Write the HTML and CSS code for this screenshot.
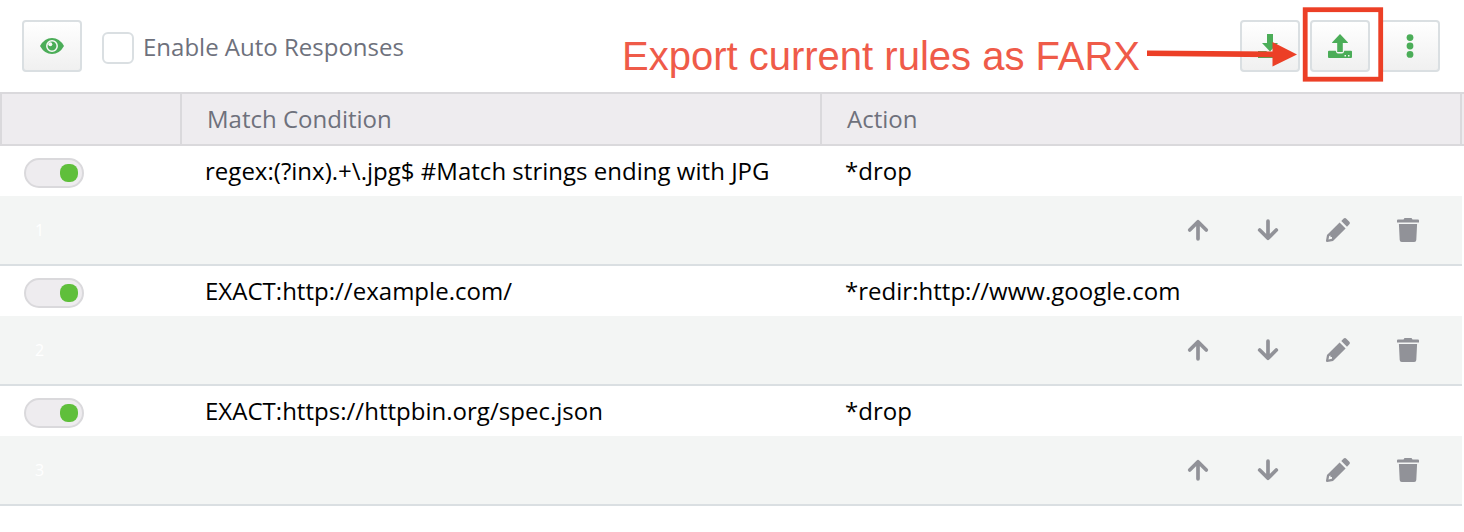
FILE: index.html
```html
<!DOCTYPE html>
<html lang="en">
<head>
<meta charset="utf-8">
<title>Auto Responder</title>
<link rel="stylesheet" href="styles.css">
</head>
<body>
<svg class="defs" aria-hidden="true">
  <symbol id="up" viewBox="0 0 24 24"><path d="M12 20.800V4.500M3.700 12L12 3.700L20.300 12" fill="none" stroke="currentColor" stroke-width="3.700" stroke-linejoin="round" stroke-linecap="round"/></symbol>
  <symbol id="down" viewBox="0 0 24 24"><path d="M12 3.200V19.500M3.700 12L12 20.300L20.300 12" fill="none" stroke="currentColor" stroke-width="3.700" stroke-linejoin="round" stroke-linecap="round"/></symbol>
  <symbol id="pencil" viewBox="0 0 24 24"><path fill="currentColor" fill-rule="evenodd" d="M13.600 4.400L19.600 10.400L7 23L1.200 24Q-.2 24 0 22.600L1 17ZM3.200 18L2.500 21.500L6 20.800V19H4.500V17.500ZM15.300 2.900L17.400 .8Q19-.7 20.600 .9L23.100 3.400Q24.700 5 23.100 6.600L21 8.700Z"/></symbol>
  <symbol id="trash" viewBox="0 0 24 24"><path fill="currentColor" d="M1 2.500Q1 1.500 2 1.500H7.500L8.500 0H15.500L16.500 1.500H22Q23 1.500 23 2.500V4.500H1ZM2.900 6H21.100L20.300 22Q20.200 24 18.200 24H5.800Q3.800 24 3.700 22Z"/></symbol>
</svg>
<header class="toolbar">
  <button class="btn" aria-label="Preview"><svg width="24" height="16" viewBox="0 0 24 16"><path fill="currentColor" d="M0 8Q4.500 0 12 0T24 8Q19.500 16 12 16T0 8Z"/><circle cx="12" cy="8" r="5.200" fill="none" stroke="#f9f9f9" stroke-width="1.500"/><circle cx="10.300" cy="6.200" r="2" fill="#f9f9f9"/></svg></button>
  <label class="enable"><span class="check"></span><span class="caption">Enable Auto Responses</span></label>
  <div class="actions">
    <button class="btn" aria-label="Import"><svg width="24" height="24" viewBox="0 0 24 24"><path fill="currentColor" d="M9 0H15V9H20L12 17.500L4 9H9ZM0 17H8L12 20L16 17H24V24H0Z"/></svg></button>
    <button class="btn" aria-label="Export"><svg width="24" height="24" viewBox="0 0 24 24"><path fill="currentColor" d="M9.200 18V9H4Q4 8.400 4.500 7.900L12 0L19.500 7.900Q20 8.400 20 9H14.800V18ZM1 16.700H7.700Q8.200 19.400 10 19.400H14Q15.800 19.400 16.300 16.700H23Q24 16.700 24 17.700V23Q24 24 23 24H1Q0 24 0 23V17.700Q0 16.700 1 16.700Z"/><path fill="#f4f4f4" d="M16.500 21h1.500v1.500h-1.500zM20 21h1.500v1.500h-1.500z"/></svg></button>
    <button class="btn" aria-label="More"><svg width="8" height="24" viewBox="0 0 8 24" fill="currentColor"><circle cx="4" cy="3.600" r="3.400"/><circle cx="4" cy="12" r="3.400"/><circle cx="4" cy="20.400" r="3.400"/></svg></button>
  </div>
  <div class="note">Export current rules as FARX</div>
  <svg class="arrow" width="152" height="30" viewBox="0 0 152 30"><path fill="#ec3f26" d="M1 9.500L126.500 10.500V1L151 13.500L126.500 25.500V16.200L1 15Z"/></svg>
  <svg class="highlight" width="82" height="76" viewBox="0 0 82 76"><rect x="3.200" y="2.700" width="75.500" height="69.500" fill="none" stroke="#ec3f26" stroke-width="4.800"/></svg>
</header>
<main class="rules">
  <div class="head"><div class="cell"></div><div class="cell">Match Condition</div><div class="cell">Action</div><div></div></div>
  <section class="rule">
    <div class="line"><span class="toggle"></span><span class="text">regex:(?inx).+\.jpg$ #Match strings ending with JPG</span><span class="text">*drop</span></div>
    <div class="tools"><span class="num">1</span><svg class="icon"><use href="#up"/></svg><svg class="icon"><use href="#down"/></svg><svg class="icon"><use href="#pencil"/></svg><svg class="icon"><use href="#trash"/></svg></div>
  </section>
  <section class="rule">
    <div class="line"><span class="toggle"></span><span class="text">EXACT:http://example.com/</span><span class="text">*redir:http://www.google.com</span></div>
    <div class="tools"><span class="num">2</span><svg class="icon"><use href="#up"/></svg><svg class="icon"><use href="#down"/></svg><svg class="icon"><use href="#pencil"/></svg><svg class="icon"><use href="#trash"/></svg></div>
  </section>
  <section class="rule">
    <div class="line"><span class="toggle"></span><span class="text">EXACT:https://httpbin.org/spec.json</span><span class="text">*drop</span></div>
    <div class="tools"><span class="num">3</span><svg class="icon"><use href="#up"/></svg><svg class="icon"><use href="#down"/></svg><svg class="icon"><use href="#pencil"/></svg><svg class="icon"><use href="#trash"/></svg></div>
  </section>
</main>
</body>
</html>
```
FILE: styles.css
```css
* { box-sizing: border-box; }
body { margin: 0; background: #fff; color: #000; font: 24px/32px "Open Sans", "Noto Sans", sans-serif; overflow: hidden; }
.defs { display: none; }
.toolbar { position: relative; display: flex; align-items: center; height: 92px; padding: 0 24px 0 22px; }
.btn { display: flex; align-items: center; justify-content: center; width: 60px; height: 52px; padding: 0; border: 2px solid #dadfe2; border-radius: 4px; background: linear-gradient(#fff, #f0f0f0); color: #4bad58; }
.enable { display: flex; align-items: center; gap: 9px; margin-left: 20px; padding-top: 4px; color: #6e717c; line-height: 32px; }
.caption { margin-top: -2px; }
.check { width: 32px; height: 32px; border: 2px solid #dadfe2; border-radius: 6px; background: #fff; }
.actions { display: flex; gap: 10px; margin-left: auto; }
.note { position: absolute; left: 622px; top: 33px; color: #ef5b49; font: 40px/46px "Liberation Sans", Arial, sans-serif; white-space: nowrap; }
.arrow { position: absolute; left: 1146px; top: 41px; }
.highlight { position: absolute; left: 1302px; top: 7px; }
.head { display: grid; grid-template-columns: 180px 640px 640px 2px; height: 54px; border: solid #dad9dc; border-width: 2px 0 2px 2px; background: #eeecef; color: #6e717c; }
.cell { padding: 9px 0 0 25px; border-right: 2px solid #dad9dc; }
.rule { width: 1462px; border-bottom: 2px solid #dadfe2; }
.line { display: grid; grid-template-columns: 181px 640px 1fr; align-items: center; height: 50px; padding-left: 24px; }
.toggle { display: flex; align-items: center; justify-content: flex-end; width: 60px; height: 30px; margin-top: 4px; padding-right: 4px; border: 2px solid #dad9dc; border-radius: 15px; background: #eeecef; }
.toggle::after { content: ""; width: 18px; height: 18px; border-radius: 8px; background: #5fbf3b; }
.text { white-space: nowrap; letter-spacing: .02px; }
.tools { display: flex; align-items: center; gap: 46px; height: 68px; padding: 0 42px 0 35px; background: #f3f5f4; color: #919298; }
.num { margin-right: auto; color: #fff; font-size: 16px; }
.icon { width: 24px; height: 24px; }
```
